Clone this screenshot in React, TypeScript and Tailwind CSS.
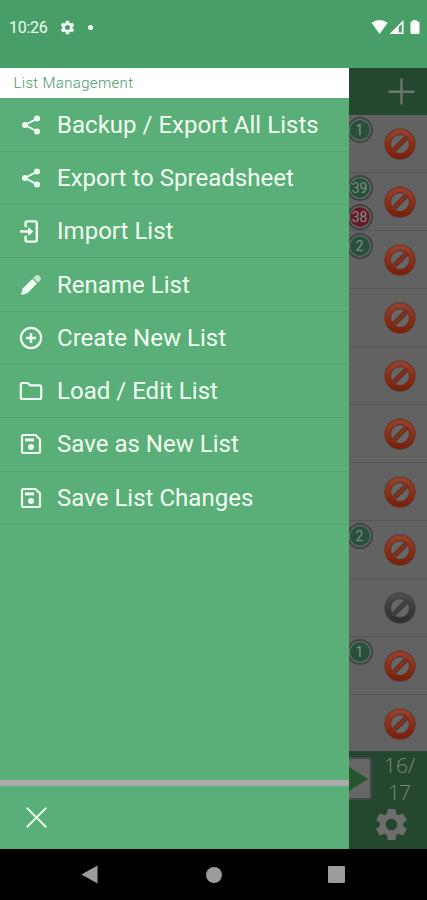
import React from "react";
import { MdSettings } from "react-icons/md";

const ShareIcon = () => (
  <svg width="20" height="20" viewBox="0 0 20 20" fill="currentColor">
    <path d="M16 3.6L4 10L16 16.4" fill="none" stroke="currentColor" strokeWidth="1.8" />
    <circle cx="16" cy="3.6" r="3" />
    <circle cx="4" cy="10" r="3" />
    <circle cx="16" cy="16.4" r="3" />
  </svg>
);

const AddIcon = () => (
  <svg width="24" height="24" viewBox="0 0 24 24" fill="none" stroke="currentColor" strokeWidth="2.2">
    <circle cx="12" cy="12" r="10.1" />
    <path d="M7 12H17M12 7V17" strokeWidth="2.4" />
  </svg>
);

const ImportIcon = () => (
  <svg className="-ml-[2px]" width="24" height="25" viewBox="0 0 24 25" fill="none" stroke="currentColor" strokeWidth="2.4">
    <path d="M7.6 8.2V4Q7.6 2.4 9.2 2.4H17.2Q18.8 2.4 18.8 4V21Q18.8 22.6 17.2 22.6H9.2Q7.6 22.6 7.6 21V16.8" />
    <path d="M2 12.5H12" />
    <path d="M10.2 8L15.2 12.5L10.2 17Z" fill="currentColor" stroke="none" />
  </svg>
);

const PencilIcon = () => (
  <svg width="22" height="22" viewBox="0 0 22 22" fill="currentColor">
    <path d="M1 21L2.6 14.6L12.4 4.9L17 9.6L7.4 19.3Z" />
    <path d="M13.2 4.1L15.6 1.8Q17.3 .3 19 1.6L20.3 2.9Q21.8 4.6 20.2 6.4L17.8 8.8Z" opacity="0.7" />
  </svg>
);

const FolderIcon = () => (
  <svg width="24" height="20" viewBox="0 0 24 20" fill="none" stroke="currentColor" strokeWidth="2.2">
    <path d="M3.6 2H8.8L11.2 4.4H20.4Q22.2 4.4 22.2 6.2V16.2Q22.2 18 20.4 18H3.6Q1.8 18 1.8 16.2V3.8Q1.8 2 3.6 2Z" />
  </svg>
);

const SaveIcon = () => (
  <svg width="22" height="22" viewBox="0 0 22 22">
    <path d="M3.4 2H15.6L20 6.4V18.6Q20 20 18.6 20H3.4Q2 20 2 18.6V3.4Q2 2 3.4 2Z" fill="none" stroke="currentColor" strokeWidth="2.2" />
    <path d="M5 5.4H14V8.4H5Z" fill="currentColor" />
    <circle cx="11" cy="14" r="3" fill="currentColor" />
  </svg>
);

const items = [
  { icon: <ShareIcon />, label: "Backup / Export All Lists" },
  { icon: <ShareIcon />, label: "Export to Spreadsheet" },
  { icon: <ImportIcon />, label: "Import List" },
  { icon: <PencilIcon />, label: "Rename List" },
  { icon: <AddIcon />, label: "Create New List" },
  { icon: <FolderIcon />, label: "Load / Edit List" },
  { icon: <SaveIcon />, label: "Save as New List" },
  { icon: <SaveIcon />, label: "Save List Changes" },
];

const Ban = ({ gray }: { gray?: boolean }) => {
  const id = gray ? "ban-gray" : "ban-red";
  return (
    <svg width="34" height="34" viewBox="0 0 34 34">
      <defs>
        <linearGradient id={id} x1="0" y1="0" x2="0" y2="1">
          <stop offset="0" stopColor={gray ? "#4c4c4c" : "#93412e"} />
          <stop offset="0.5" stopColor={gray ? "#3c3c3c" : "#8b3016"} />
          <stop offset="1" stopColor={gray ? "#303030" : "#7a210c"} />
        </linearGradient>
      </defs>
      <circle cx="17" cy="17" r="9.5" fill="#676767" />
      <g fill="none" stroke={gray ? "#3a3a3a" : "#66281a"}>
        <circle cx="17" cy="17" r="12.3" strokeWidth="6.4" />
        <path d="M9.5 24.5L24.5 9.5" strokeWidth="5.2" />
      </g>
      <circle cx="17" cy="17" r="12.3" fill="none" stroke={`url(#${id})`} strokeWidth="4.8" />
      <path d="M9.5 24.5L24.5 9.5" stroke={gray ? "#3f3f3f" : "#7c3420"} strokeWidth="3.2" />
    </svg>
  );
};

const Badge = ({ n, red }: { n: string; red?: boolean }) => (
  <div className="flex h-[26px] w-[26px] shrink-0 items-center justify-center rounded-full border-2 border-[#3d4440] bg-[#6d716f] p-px">
    <div className={`flex h-full w-full items-center justify-center rounded-full text-[14px] leading-none text-[#838d87] ${red ? "bg-[#651c28]" : "bg-[#28503a]"}`}>{n}</div>
  </div>
);

const rows: { badges: { n: string; red?: boolean }[]; gray?: boolean }[] = [
  { badges: [{ n: "1" }] },
  { badges: [{ n: "39" }, { n: "38", red: true }] },
  { badges: [{ n: "2" }] },
  { badges: [] },
  { badges: [] },
  { badges: [] },
  { badges: [] },
  { badges: [{ n: "2" }] },
  { badges: [], gray: true },
  { badges: [{ n: "1" }] },
  { badges: [] },
];

export default function App() {
  return (
    <div className="flex h-[900px] w-[427px] flex-col overflow-hidden bg-black font-['Roboto',sans-serif]">
      <div className="flex h-[68px] shrink-0 items-start bg-[#479f67] pl-[9px] text-[#f2fff5]">
        <span className="mt-[18px] w-[49.5px] text-[16px] leading-5 tracking-[-0.3px]">10:26</span>
        <MdSettings size={17} className="mt-[18.5px]" />
        <span className="mt-[25px] ml-[12.5px] h-[5px] w-[5px] rounded-full bg-white" />
        <svg className="mt-[18px] ml-auto mr-[4px]" width="52" height="18" viewBox="0 0 52 18" fill="#fff">
          <path d="M.5 4.8Q8.5 -1 16.7 4.8L8.6 16Z" />
          <path fillRule="evenodd" d="M18.5 16L32.5 2V16ZM27.7 9V14.5H30.8V5.8Z" />
          <path d="M41.7 3.5V2H45.8V3.5H47.2Q48.5 3.5 48.5 4.8V14.7Q48.5 16 47.2 16H40.8Q39.5 16 39.5 14.7V4.8Q39.5 3.5 40.8 3.5Z" />
        </svg>
      </div>

      <div className="flex h-[781px] shrink-0">
        <div className="flex w-[348.5px] shrink-0 flex-col bg-[#5aae77]">
          <div className="h-[29.5px] shrink-0 bg-white pl-[13.5px] text-[15px] leading-[31px] font-light tracking-[0.33px] text-[#479a67]">List Management</div>
          <div className="flex flex-col pt-px">
            {items.map(({ icon, label }) => (
              <div key={label} className="flex h-[53.3px] shrink-0 items-center border-b border-[#51a46e] text-[#f2fff3]">
                <div className="ml-[17px] flex w-[28px] justify-center">{icon}</div>
                <span className="ml-[12px] text-[24.05px] leading-8 whitespace-nowrap">{label}</span>
              </div>
            ))}
          </div>
          <div className="mt-auto h-[6px] shrink-0 bg-[#aaaaaa]" />
          <div className="flex h-[63.5px] shrink-0 items-center pl-[26px]">
            <svg width="21" height="21" viewBox="0 0 21 21" stroke="#e4ffe5" strokeWidth="2.1">
              <path d="M.7 .7L20.3 20.3M20.3 .7L.7 20.3" />
            </svg>
          </div>
        </div>

        <div className="flex min-w-0 flex-1 flex-col bg-[#626262]">
          <div className="flex h-[47px] shrink-0 items-center justify-end bg-[#24482f] pr-[12px]">
            <svg width="27" height="27" viewBox="0 0 27 27" stroke="#6d766f" strokeWidth="2.4">
              <path d="M0.5 13.8H26.5M13.5 .5V26.5" />
            </svg>
          </div>
          <div className="flex h-[636px] shrink-0 flex-col overflow-hidden">
            {rows.map((r, i) => (
              <div key={i} className="flex h-[58.05px] shrink-0 justify-between border-b border-[#555555] pr-[10px]">
                <div className="-ml-[2px] flex flex-col gap-[3px] pt-[2px]">
                  {r.badges.map((b) => (
                    <Badge key={b.n} {...b} />
                  ))}
                </div>
                <div className="pt-[12px]">
                  <Ban gray={r.gray} />
                </div>
              </div>
            ))}
          </div>
          <div className="flex flex-1 justify-between bg-[#24482f]">
            <div className="mt-[6px] flex h-[43px] w-[23.5px] items-center rounded-r-[4px] border-2 border-l-0 border-[#454b47] bg-[#666668]">
              <svg width="19" height="26" viewBox="0 0 19 26">
                <path d="M0 1L19 13L0 25Z" fill="#28562c" />
              </svg>
            </div>
            <div className="flex w-[55px] flex-col pt-px text-[#7b877f]">
              <div className="pl-[12px] font-['Open_Sans',sans-serif] text-[21px] leading-[27px] font-light">
                <div>16/</div>
                <div className="pl-[4px] tracking-[-1px]">17</div>
              </div>
              <MdSettings size={39} className="-mt-px" color="#6d6d6d" />
            </div>
          </div>
        </div>
      </div>

      <div className="flex flex-1 items-center pl-[81px]">
        <svg width="17" height="19" viewBox="0 0 17 19" fill="#9c9c9c"><path d="M0.5 9.5L16.5 0.5V18.5Z" /></svg>
        <div className="ml-[108px] h-[16px] w-[16px] rounded-full bg-[#9c9c9c]" />
        <div className="ml-[106px] h-[17px] w-[17px] rounded-[1px] bg-[#9c9c9c]" />
      </div>
    </div>
  );
}
